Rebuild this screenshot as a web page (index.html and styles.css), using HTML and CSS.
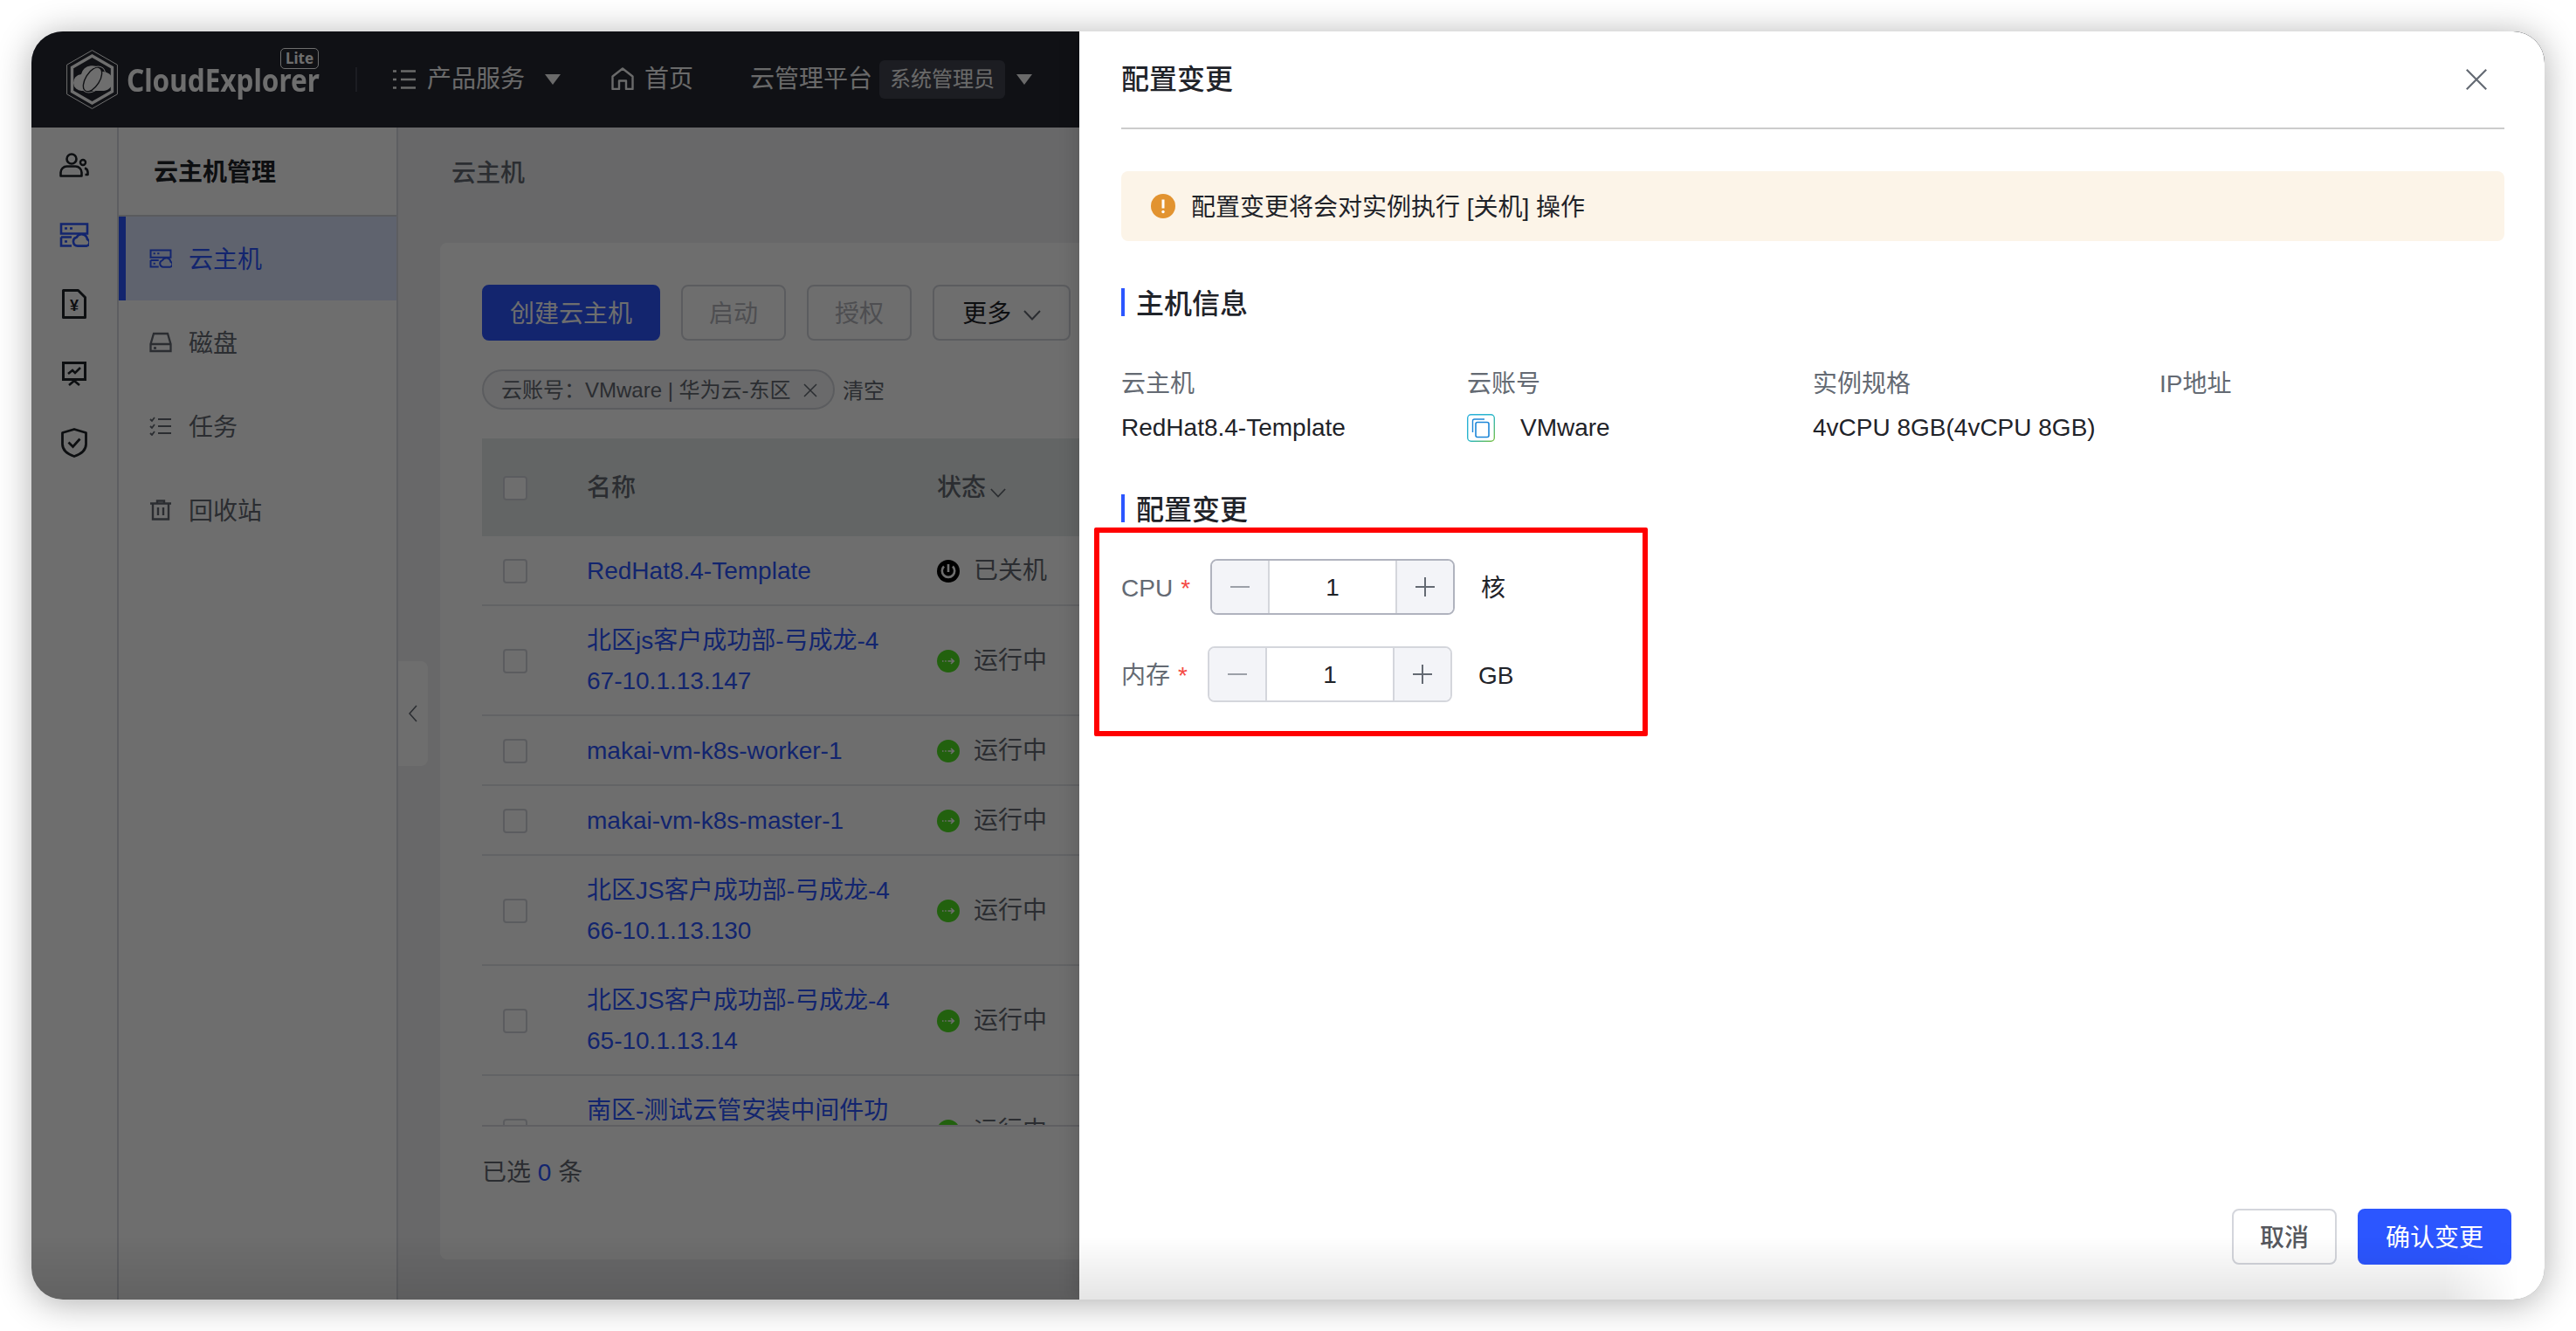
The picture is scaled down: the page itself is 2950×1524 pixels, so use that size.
FILE: index.html
```html
<!DOCTYPE html>
<html>
	<head>
		<meta charset="UTF-8">
		<title>配置变更</title>
		<link rel="stylesheet" href="styles.css">
	</head>

	<body>
		<svg class="sprite" width="0" height="0">
			<symbol id="i-server" viewBox="0 0 34 28">
				<path d="M2 1.500h30v11H2zM2 16.500h12M2 16.500v10h12" fill="none" stroke="currentColor" stroke-width="2.600"/>
				<path d="M6 6.500h3M12 6.500h3M6 21.500h3" fill="none" stroke="currentColor" stroke-width="2.400"/>
				<path d="M21 26.600a5 5 0 0 1-1.400-9.800 6.600 6.600 0 0 1 12.400 2.200 4 4 0 0 1-.6 7.600z" fill="none" stroke="currentColor" stroke-width="2.600" stroke-linejoin="round"/>
			</symbol>
			<symbol id="i-run" viewBox="0 0 26 26">
				<circle cx="13" cy="13" r="13" fill="#50e022"/>
				<path d="M12.500 13h6.500M16 10l3.200 3-3.200 3" fill="none" stroke="#fff" stroke-width="1.700"/>
				<path d="M6 13h1.500M9.200 13h1.500" fill="none" stroke="#fff" stroke-width="1.700"/>
			</symbol>
			<symbol id="i-caret" viewBox="0 0 18 12">
				<path d="M0 0h18L9 12z" fill="currentColor"/>
			</symbol>
			<symbol id="i-chevron" viewBox="0 0 20 12">
				<path d="M1 1l9 9.500L19 1" fill="none" stroke="currentColor" stroke-width="2"/>
			</symbol>
		</svg>

		<div class="window">
			<header class="topbar">
				<svg class="logo" viewBox="0 0 59 68" width="59" height="68">
					<path d="M29.500 .6L58.400 17.200v33.600L29.500 67.400 .6 50.800V17.200z" fill="none" stroke="#fff" stroke-width="1"/>
					<path d="M29.500 7l23 13.200v27.600l-23 13.200-23-13.200V20.200z" fill="none" stroke="#fff" stroke-width="3.400"/>
					<path d="M18 47a9.500 9.500 0 0 1-1-19 13 13 0 0 1 24-3 11 11 0 0 1 2 22z" fill="#fff"/>
					<ellipse cx="30" cy="34" rx="8" ry="15.500" transform="rotate(32 30 34)" fill="none" stroke="#25282f" stroke-width="1.400"/>
					<ellipse cx="31" cy="34" rx="11" ry="17" transform="rotate(38 31 34)" fill="none" stroke="#fff" stroke-width="1"/>
				</svg>
				<div class="brand">
					<span class="brand-name">CloudExplorer</span>
					<span class="brand-lite">Lite</span>
				</div>
				<i class="topbar-sep"></i>
				<nav class="topnav">
					<svg class="nav-icon" viewBox="0 0 26 24" width="26" height="24">
						<path d="M0 2.500h4M9 2.500h17M0 12h4M9 12h17M0 21.500h4M9 21.500h17" fill="none" stroke="currentColor" stroke-width="2.400"/>
					</svg>
					<span class="nav-text">产品服务</span>
					<svg class="caret"><use href="#i-caret"/></svg>
					<svg class="nav-icon home" viewBox="0 0 26 26" width="26" height="26">
						<path d="M1.500 25V10.500L13 1.500l11.500 9V25H17V15.500H9V25z" fill="none" stroke="currentColor" stroke-width="2.400" stroke-linejoin="round"/>
					</svg>
					<span class="nav-text">首页</span>
					<span class="nav-text platform">云管理平台</span>
					<span class="role-tag">系统管理员</span>
					<svg class="caret role-caret"><use href="#i-caret"/></svg>
				</nav>
			</header>

			<div class="layout">
				<aside class="rail">
					<svg class="rail-icon" viewBox="0 0 34 28" width="34" height="28">
						<circle cx="14" cy="7" r="5.500" fill="none" stroke="currentColor" stroke-width="2.600"/>
						<circle cx="27" cy="11" r="3" fill="none" stroke="currentColor" stroke-width="2.400"/>
						<path d="M1.500 26.500v-4a7 7 0 0 1 7-7h10a7 7 0 0 1 7 7v4zM29 17.500a5 5 0 0 1 3.500 4.500v3h-3" fill="none" stroke="currentColor" stroke-width="2.600" stroke-linejoin="round"/>
					</svg>
					<svg class="rail-icon active" width="34" height="28"><use href="#i-server"/></svg>
					<svg class="rail-icon" viewBox="0 0 28 34" width="28" height="34">
						<path d="M1.500 1.500h17l8 8v23h-25z" fill="none" stroke="currentColor" stroke-width="3" stroke-linejoin="round"/>
						<text x="14" y="25" class="yen">¥</text>
					</svg>
					<svg class="rail-icon" viewBox="0 0 28 28" width="28" height="28">
						<path d="M1.500 1.500h25v19h-25z" fill="none" stroke="currentColor" stroke-width="3"/>
						<path d="M7 14l5-4 3 3 6-6M8 27l6-5 6 5" fill="none" stroke="currentColor" stroke-width="2.600"/>
					</svg>
					<svg class="rail-icon" viewBox="0 0 30 34" width="30" height="34">
						<path d="M15 1.500l13.500 4v13c0 7-6 11.500-13.500 14-7.500-2.500-13.500-7-13.500-14v-13z" fill="none" stroke="currentColor" stroke-width="2.800" stroke-linejoin="round"/>
						<path d="M8.500 16.500l5 5 8-9" fill="none" stroke="currentColor" stroke-width="2.800"/>
					</svg>
				</aside>

				<aside class="submenu">
					<h3 class="submenu-title">云主机管理</h3>
					<a class="submenu-item active">
						<svg class="item-icon" width="26" height="22"><use href="#i-server"/></svg>
						<span>云主机</span>
					</a>
					<a class="submenu-item">
						<svg class="item-icon" viewBox="0 0 26 24" width="26" height="24">
							<path d="M5 2h16l3.500 12v8h-23v-8zM1.500 14h23M5 18.500h3" fill="none" stroke="currentColor" stroke-width="2.300"/>
						</svg>
						<span>磁盘</span>
					</a>
					<a class="submenu-item">
						<svg class="item-icon" viewBox="0 0 24 22" width="24" height="22">
							<path d="M0 3l2 2 3-4M0 11l2 2 3-4M0 19l2 2 3-4" fill="none" stroke="currentColor" stroke-width="1.800"/>
							<path d="M9 3h15M9 11h15M9 19h15" fill="none" stroke="currentColor" stroke-width="2.200"/>
						</svg>
						<span>任务</span>
					</a>
					<a class="submenu-item">
						<svg class="item-icon" viewBox="0 0 24 24" width="24" height="24">
							<path d="M0 4.500h24M8 4V1.500h8V4M3 5v17.500h18V5M9 9v9M15 9v9" fill="none" stroke="currentColor" stroke-width="2.400"/>
						</svg>
						<span>回收站</span>
					</a>
				</aside>

				<main class="content">
					<div class="collapse-handle">
						<svg viewBox="0 0 10 20" width="10" height="20"><path d="M9 1L1 10l8 9" fill="none" stroke="currentColor" stroke-width="1.600"/></svg>
					</div>
					<div class="crumb">云主机</div>
					<section class="card">
						<div class="toolbar">
							<button class="btn primary">创建云主机</button>
							<button class="btn disabled">启动</button>
							<button class="btn disabled">授权</button>
							<button class="btn more">更多 <svg class="chevron"><use href="#i-chevron"/></svg></button>
						</div>
						<div class="filters">
							<span class="filter-pill">云账号：VMware | 华为云-东区
								<svg viewBox="0 0 16 16" width="16" height="16"><path d="M1 1l14 14M15 1L1 15" fill="none" stroke="currentColor" stroke-width="1.500"/></svg>
							</span>
							<span class="filter-clear">清空</span>
						</div>
						<div class="table">
							<div class="row head">
								<span class="check"></span>
								<span>名称</span>
								<span>状态<svg class="chevron small"><use href="#i-chevron"/></svg></span>
							</div>
							<div class="table-body">
								<div class="row">
									<span class="check"></span>
									<a class="name">RedHat8.4-Template</a>
									<span class="status">
										<svg viewBox="0 0 26 26" width="26" height="26">
											<circle cx="13" cy="13" r="13" fill="#000"/>
											<path d="M8 7.500a7.200 7.200 0 1 0 10 0M13 5v9" fill="none" stroke="#fff" stroke-width="2.600"/>
										</svg>
										已关机
									</span>
								</div>
								<div class="row">
									<span class="check"></span>
									<a class="name">北区js客户成功部-弓成龙-467-10.1.13.147</a>
									<span class="status"><svg width="26" height="26"><use href="#i-run"/></svg>运行中</span>
								</div>
								<div class="row">
									<span class="check"></span>
									<a class="name">makai-vm-k8s-worker-1</a>
									<span class="status"><svg width="26" height="26"><use href="#i-run"/></svg>运行中</span>
								</div>
								<div class="row">
									<span class="check"></span>
									<a class="name">makai-vm-k8s-master-1</a>
									<span class="status"><svg width="26" height="26"><use href="#i-run"/></svg>运行中</span>
								</div>
								<div class="row">
									<span class="check"></span>
									<a class="name">北区JS客户成功部-弓成龙-466-10.1.13.130</a>
									<span class="status"><svg width="26" height="26"><use href="#i-run"/></svg>运行中</span>
								</div>
								<div class="row">
									<span class="check"></span>
									<a class="name">北区JS客户成功部-弓成龙-465-10.1.13.14</a>
									<span class="status"><svg width="26" height="26"><use href="#i-run"/></svg>运行中</span>
								</div>
								<div class="row">
									<span class="check"></span>
									<a class="name">南区-测试云管安装中间件功能验证-10.1.13.9</a>
									<span class="status"><svg width="26" height="26"><use href="#i-run"/></svg>运行中</span>
								</div>
							</div>
						</div>
						<div class="selected">已选 <em>0</em> 条</div>
					</section>
				</main>
			</div>

			<div class="mask"></div>

			<aside class="drawer">
				<div class="drawer-head">
					<h2>配置变更</h2>
					<svg viewBox="0 0 24 24" width="24" height="24"><path d="M.8 .8l22.400 22.400M23.200 .8L.8 23.200" fill="none" stroke="currentColor" stroke-width="2.200"/></svg>
				</div>

				<div class="alert">
					<svg viewBox="0 0 28 28" width="28" height="28">
						<circle cx="14" cy="14" r="14" fill="#e29330"/>
						<path d="M14 6.500v10" stroke="#fff" stroke-width="3"/>
						<circle cx="14" cy="20.500" r="1.700" fill="#fff"/>
					</svg>
					<span>配置变更将会对实例执行 [关机] 操作</span>
				</div>

				<h4 class="section-title first">主机信息</h4>
				<div class="info-grid">
					<span class="info-label">云主机</span>
					<span class="info-label">云账号</span>
					<span class="info-label">实例规格</span>
					<span class="info-label">IP地址</span>
					<span>RedHat8.4-Template</span>
					<span class="account">
						<svg viewBox="0 0 32 32" width="32" height="32">
							<defs>
								<linearGradient id="vm" x1="0" y1="0" x2="1" y2="1">
									<stop offset="0" stop-color="#2ab0dc"/>
									<stop offset=".5" stop-color="#29b6c8"/>
									<stop offset="1" stop-color="#7ac143"/>
								</linearGradient>
							</defs>
							<rect x=".7" y=".7" width="30.600" height="30.600" rx="4" fill="none" stroke="url(#vm)" stroke-width="1.400"/>
							<path d="M20 6H8.500A2 2 0 0 0 6.500 8v13" fill="none" stroke="#1c86d8" stroke-width="1.400"/>
							<rect x="10" y="9.500" width="15" height="17" rx="2" fill="#fff" stroke="#1c86d8" stroke-width="1.600"/>
						</svg>
						VMware
					</span>
					<span>4vCPU 8GB(4vCPU 8GB)</span>
					<span></span>
				</div>

				<h4 class="section-title second">配置变更</h4>
				<form class="spec-form">
					<div class="spec-row">
						<label>CPU<b>*</b></label>
						<div class="stepper hover">
							<span class="step">
								<svg viewBox="0 0 22 22" width="22" height="22"><path d="M0 11h22" stroke="#9ca0a8" stroke-width="2"/></svg>
							</span>
							<span class="step-value">1</span>
							<span class="step">
								<svg viewBox="0 0 22 22" width="22" height="22"><path d="M0 11h22M11 0v22" stroke="#646a73" stroke-width="2"/></svg>
							</span>
						</div>
						<span class="unit">核</span>
					</div>
					<div class="spec-row">
						<label>内存<b>*</b></label>
						<div class="stepper">
							<span class="step">
								<svg viewBox="0 0 22 22" width="22" height="22"><path d="M0 11h22" stroke="#9ca0a8" stroke-width="2"/></svg>
							</span>
							<span class="step-value">1</span>
							<span class="step">
								<svg viewBox="0 0 22 22" width="22" height="22"><path d="M0 11h22M11 0v22" stroke="#646a73" stroke-width="2"/></svg>
							</span>
						</div>
						<span class="unit">GB</span>
					</div>
				</form>
				<div class="red-mark"></div>

				<div class="drawer-foot">
					<button class="btn cancel">取消</button>
					<button class="btn confirm">确认变更</button>
				</div>
			</aside>

			<div class="bottom-fade"></div>
		</div>
	</body>
</html>
```

FILE: styles.css
```css
* { box-sizing: border-box; }

body {
    font: 28px/40px "Liberation Sans", "Noto Sans CJK SC", sans-serif;
    color: #1f2329;
    margin: 0; padding: 36px;
    height: 100vh;
    background: #fff;
}

.sprite { display: block; }

h2, h3, h4 { margin: 0; }

.window {
    position: relative;
    height: 100%;
    border-radius: 36px;
    overflow: hidden;
    display: flex; flex-direction: column;
    background: #f0f1f3;
}

body::before {
    content: "";
    position: absolute; top: 36px; right: 36px; bottom: 36px; left: 36px;
    border-radius: 36px;
    box-shadow: 0 4px 40px rgba(0, 0, 0, .32);
}

/* top bar */
.topbar {
    flex: none;
    height: 110px;
    padding-left: 40px;
    background: #252832;
    color: #fff;
    display: flex; align-items: center;
}

.logo { flex: none; }

.brand {
    position: relative;
    width: 219px;
    margin-left: 10px;
    margin-right: 1px;
    height: 68px;
}

.brand-name {
    position: absolute; left: 0; top: 22px;
    font: 700 35px/26px "Noto Sans", sans-serif;
    white-space: nowrap;
    transform: scaleX(.9);
    transform-origin: left center;
}

.brand-lite {
    position: absolute; right: -1px; top: -2px;
    width: 44px; height: 24px;
    border: 1.500px solid #fff;
    border-radius: 5px;
    font: 700 17px/21px "Noto Sans", sans-serif;
    text-align: center;
}

.topbar-sep {
    flex: none;
    width: 2px; height: 28px;
    margin: 0 41px 0 42px;
    background: #41434f;
}

.topnav {
    display: flex; align-items: center;
    color: #f5f5f5;
}

.nav-icon { flex: none; margin-right: 13px; }

.nav-icon.home { margin: -3px 12px 0 58px; }

.nav-text { white-space: nowrap; }

.platform { margin-left: 65px; }

.caret { width: 18px; height: 12px; margin-left: 23px; }

.role-tag {
    height: 44px;
    margin-left: 8px;
    padding: 0 12px;
    border-radius: 6px;
    background: #41434f;
    font-size: 24px; line-height: 44px;
}

.caret.role-caret { margin-left: 13px; }

/* left columns */
.layout {
    flex: 1;
    min-height: 0;
    display: flex;
}

.rail {
    flex: none;
    width: 100px;
    background: #fff;
    border-right: 2px solid #d8dae0;
    display: flex; flex-direction: column; align-items: center;
    padding-top: 26px;
    color: #1f2329;
}

.rail-icon { display: block; height: 34px; margin-bottom: 45.500px; }

.rail-icon.active { color: #2c56ff; }

.yen {
    font: 700 18px "Liberation Sans", sans-serif;
    fill: currentColor;
    text-anchor: middle;
}

.submenu {
    flex: none;
    width: 320px;
    background: #fff;
    border-right: 2px solid #d8dae0;
}

.submenu-title {
    height: 102px;
    padding-left: 40px;
    border-bottom: 2px solid #d0d2d8;
    font-size: 28px; line-height: 103px;
    font-weight: 600;
}

.submenu-item {
    height: 96px;
    padding-left: 35px;
    display: flex; align-items: center;
    color: #646a73;
}

.submenu-item span { padding-top: 4px; }

.submenu-item.active {
    border-left: 8px solid #2c56ff;
    padding-left: 27px;
    background: #dde6ff;
    color: #2c56ff;
}

.item-icon { flex: none; width: 26px; margin-right: 19px; }

/* main area */
.content {
    position: relative;
    flex: 1;
    min-width: 0;
    padding: 0 48px 46px;
    display: flex; flex-direction: column;
}

.collapse-handle {
    position: absolute; left: 0; top: 611px;
    width: 34px; height: 120px;
    border-radius: 0 8px 8px 0;
    background: #fff;
    color: #646a73;
    display: flex; align-items: center; justify-content: center;
}

.crumb {
    flex: none;
    height: 132px;
    padding: 33px 0 0 13px;
    font-weight: 500;
    color: #646a73;
}

.card {
    flex: 1;
    min-height: 0;
    padding: 48px 48px 0;
    border-radius: 8px;
    background: #fff;
}

.btn {
    height: 64px;
    padding: 4px 30px 0;
    border: 2px solid #d4d6dc;
    border-radius: 8px;
    background: #fff;
    font: inherit;
    color: #1f2329;
}

.toolbar { display: flex; gap: 24px; }

.btn.primary { border-color: #2c56ff; background: #2c56ff; color: #fff; }

.btn.disabled { width: 120px; padding: 4px 0 0; color: #b4b6bc; }

.btn.more { width: 158px; padding: 4px 0 0; }

.chevron { width: 20px; height: 12px; margin-left: 6px; vertical-align: 2px; color: #646a73; }

.chevron.small { width: 18px; height: 11px; margin-left: 5px; vertical-align: -2px; }

.filters {
    margin-top: 33px;
    display: flex; align-items: center;
    font-size: 24px;
    color: #646a73;
}

.filter-pill {
    height: 46px;
    width: 404px;
    padding: 2px 18px 0 20px;
    border: 2px solid #d4d6dc;
    border-radius: 23px;
    background: #f5f6f7;
    line-height: 40px;
    white-space: nowrap;
    display: flex; align-items: center; justify-content: space-between;
}

.filter-clear { margin-left: 9px; padding-top: 3px; }

.table { margin-top: 33px; }

.row {
    display: grid;
    grid-template-columns: 120px 401px 1fr;
    align-items: center;
    padding: 17px 0 15px;
    border-bottom: 2px solid #e4e5ea;
}

.row.head {
    height: 112px;
    padding: 2px 0 0;
    border-bottom: 0;
    background: #e6ebe9;
    font-weight: 500;
    color: #646a73;
}

.table-body {
    height: 676px;
    overflow: hidden;
    border-bottom: 2px solid #dcdde3;
}

.check {
    width: 28px; height: 28px;
    margin-left: 24px;
    border: 2px solid #d4d6dc;
    border-radius: 4px;
    background: #fff;
}

.name {
    width: 348px;
    line-height: 46px;
    word-break: break-all;
    color: #2c56ff;
}

.status {
    display: flex; align-items: center; gap: 16px;
    color: #646a73;
    line-height: 46px;
}

.selected {
    margin-top: 33px;
    color: #646a73;
}

.selected em { font-style: normal; color: #2c56ff; }

/* dimmed layer and drawer */
.mask {
    position: absolute; top: 0; right: 0; bottom: 0; left: 0;
    background: rgba(0, 0, 0, .57);
}

.drawer {
    position: absolute; top: 0; right: 0; bottom: 0;
    width: 1678px;
    padding: 0 46px 0 48px;
    background: #fff;
    box-shadow: -6px 0 18px rgba(0, 0, 0, .12);
    display: flex; flex-direction: column;
}

.drawer-head {
    flex: none;
    height: 112px;
    border-bottom: 2px solid #ccc;
    display: flex; align-items: center; justify-content: space-between;
    padding: 0 20px 0 0;
    color: #646a73;
}

.drawer-head h2 {
    font-size: 32px; font-weight: 500;
    color: #1f2329;
}

.alert {
    flex: none;
    height: 80px;
    margin-top: 48px;
    padding-left: 34px;
    border-radius: 8px;
    background: #fcf4e8;
    display: flex; align-items: center; gap: 18px;
}

.alert span { padding-top: 3px; }

.section-title {
    height: 32px;
    padding-left: 13px;
    border-left: 4px solid #2c56ff;
    font-size: 32px; line-height: 37px;
    font-weight: 500;
}

.section-title.first { margin-top: 54px; }

.section-title.second { margin-top: 56px; }

.info-grid {
    margin-top: 58px;
    display: grid;
    grid-template-columns: 396px 396px 397px 1fr;
    row-gap: 10px;
}

.info-label { color: #646a73; }

.account { display: flex; align-items: center; gap: 29px; }

.spec-form {
    margin-top: 42px;
    display: flex; flex-direction: column; gap: 36px;
}

.spec-row { display: flex; align-items: center; }

.spec-row label { padding-top: 3px; color: #646a73; }

.spec-row b {
    margin: 0 23px 0 9px;
    font-weight: 400;
    color: #f54a45;
}

.stepper {
    width: 280px; height: 64px;
    border: 2px solid #d4d6dc;
    border-radius: 8px;
    overflow: hidden;
    display: flex;
}

.stepper.hover { border-color: #b0b3be; }

.step {
    flex: none;
    width: 64px;
    background: #f3f4f8;
    display: flex; align-items: center; justify-content: center;
}

.step-value {
    flex: 1;
    padding-top: 2px;
    border-left: 2px solid #d4d6dc;
    border-right: 2px solid #d4d6dc;
    line-height: 58px;
    text-align: center;
}

.unit { margin-left: 30px; padding-top: 3px; }

.red-mark {
    position: absolute; left: 17px; top: 568px;
    width: 634px; height: 239px;
    border: 6px solid #f00;
    border-radius: 2px;
}

.drawer-foot {
    margin-top: auto;
    margin-right: -8px;
    padding-bottom: 40px;
    display: flex; justify-content: flex-end; gap: 24px;
}

.btn.cancel { width: 120px; padding: 4px 0 0; font-weight: 500; color: #56585e; }

.btn.confirm { width: 176px; padding: 4px 0 0; border-color: #2c56ff; background: #2c56ff; color: #fff; }

.bottom-fade {
    position: absolute; right: 0; bottom: 0; left: 0;
    height: 72px;
    background: linear-gradient(transparent, rgba(0, 0, 0, .1));
    -webkit-mask-image: linear-gradient(to right, #000 96%, transparent 99%);
    mask-image: linear-gradient(to right, #000 96%, transparent 99%);
    pointer-events: none;
}
```
